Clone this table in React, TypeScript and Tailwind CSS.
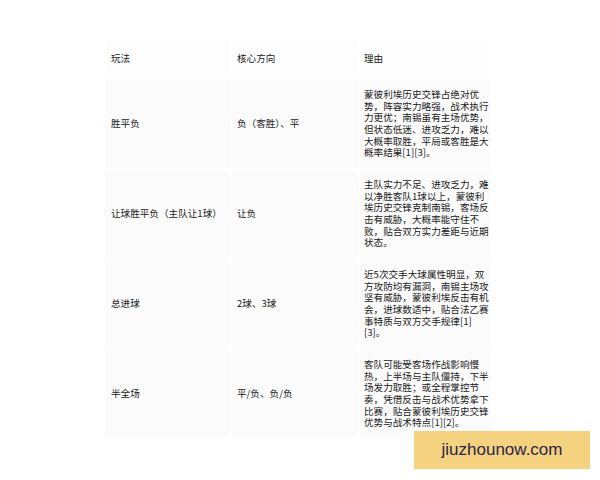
import React from "react";

const rows = [
  {
    play: "胜平负",
    dir: "负（客胜）、平",
    reason: [
      "蒙彼利埃历史交锋占绝对优",
      "势，阵容实力略强，战术执行",
      "力更优；南锡虽有主场优势，",
      "但状态低迷、进攻乏力，难以",
      "大概率取胜，平局或客胜是大",
      "概率结果[1][3]。",
    ],
  },
  {
    play: "让球胜平负（主队让1球）",
    dir: "让负",
    reason: [
      "主队实力不足、进攻乏力，难",
      "以净胜客队1球以上，蒙彼利",
      "埃历史交锋克制南锡，客场反",
      "击有威胁，大概率能守住不",
      "败，贴合双方实力差距与近期",
      "状态。",
    ],
  },
  {
    play: "总进球",
    dir: "2球、3球",
    reason: [
      "近5次交手大球属性明显，双",
      "方攻防均有漏洞，南锡主场攻",
      "坚有威胁，蒙彼利埃反击有机",
      "会，进球数适中，贴合法乙赛",
      "事特质与双方交手规律[1]",
      "[3]。",
    ],
  },
  {
    play: "半全场",
    dir: "平/负、负/负",
    reason: [
      "客队可能受客场作战影响慢",
      "热，上半场与主队僵持，下半",
      "场发力取胜；或全程掌控节",
      "奏，凭借反击与战术优势拿下",
      "比赛，贴合蒙彼利埃历史交锋",
      "优势与战术特点[1][2]。",
    ],
  },
];

export default function App() {
  return (
    <div
      className="relative w-[600px] h-[480px] bg-white overflow-hidden pt-[40px] pl-[105px] text-[#1a1a1a] text-[9.6px] leading-[11.6px]"
      style={{ fontFamily: '"Noto Sans CJK SC", "Liberation Sans", sans-serif' }}
    >
      <div className="grid grid-cols-[125px_126px_130px] grid-rows-[38px_88px_88px_88px_88px] gap-[2px]">
        {/* Header */}
        <div className="flex items-center pl-[6px] bg-[#fdfdfd]">玩法</div>
        <div className="flex items-center pl-[5px] bg-[#fdfdfd]">核心方向</div>
        <div className="flex items-center pl-[4px] bg-[#fdfdfd]">理由</div>

        {rows.map((r) => (
          <React.Fragment key={r.play}>
            <div className="flex items-center pl-[6px] bg-[#fbfbfb] whitespace-nowrap">{r.play}</div>
            <div className="flex items-center pl-[5px] bg-[#fbfbfb] whitespace-nowrap">{r.dir}</div>
            <div className="flex items-center pl-[4px] bg-[#fbfbfb]">
              <p className="whitespace-nowrap">
                {r.reason.map((line, i) => (
                  <React.Fragment key={i}>
                    {i > 0 && <br />}
                    {line}
                  </React.Fragment>
                ))}
              </p>
            </div>
          </React.Fragment>
        ))}
      </div>

      {/* Watermark */}
      <div
        className="absolute left-[414px] top-[431px] w-[176px] h-[38px] bg-[#f5d27f] flex items-center justify-center text-[17px] text-[#2b2547]"
        style={{ fontFamily: '"Liberation Sans", Arial, sans-serif' }}
      >
        jiuzhounow.com
      </div>
    </div>
  );
}
